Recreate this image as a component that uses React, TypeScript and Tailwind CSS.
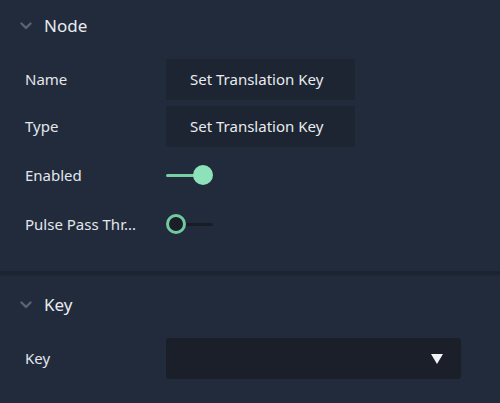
import React from "react";

const font = { fontFamily: "'Noto Sans', 'DejaVu Sans', sans-serif" };

function Chevron() {
  return (
    <svg width="12" height="8" viewBox="0 0 12 8" className="block shrink-0">
      <path d="M1.5 1.5 L6 6 L10.5 1.5" fill="none" stroke="#5b6270" strokeWidth="2.4" strokeLinecap="round" strokeLinejoin="round" />
    </svg>
  );
}

function Header({ title }: { title: string }) {
  return (
    <div className="flex h-[52px] items-center pl-[20px]">
      <Chevron />
      <span className="ml-[12px] text-[17px] text-[#e8ebf0]">{title}</span>
    </div>
  );
}

function Label({ children }: { children: React.ReactNode }) {
  return (
    <div className="w-[166px] shrink-0 whitespace-nowrap pl-[25px] text-[15px] text-[#e3e6ec]">{children}</div>
  );
}

export default function App() {
  return (
    <div className="h-[403px] w-[500px] overflow-hidden bg-[#222b3b]" style={font}>
      <Header title="Node" />
      <div className="mt-[7px] flex flex-col gap-[6px]">
        <div className="flex h-[41px] items-center">
          <Label>Name</Label>
          <div className="flex h-[41px] w-[189px] shrink-0 items-center bg-[#1d2532] pl-[24px] text-[15px] text-[#e8ebf0]">
            Set Translation Key
          </div>
        </div>
        <div className="flex h-[41px] items-center">
          <Label>Type</Label>
          <div className="flex h-[41px] w-[189px] shrink-0 items-center bg-[#1d2532] pl-[24px] text-[15px] text-[#e8ebf0]">
            Set Translation Key
          </div>
        </div>
      </div>
      <div className="flex h-[48px] items-center pt-[8px]">
        <Label>Enabled</Label>
        <div className="relative h-[20px] w-[48px] shrink-0">
          <div className="absolute left-0 top-[8.5px] h-[3px] w-[30px] rounded-full bg-[#76cfa5]" />
          <div className="absolute left-[27px] top-0 h-[20px] w-[20px] rounded-full bg-[#8de2ba]" />
        </div>
      </div>
      <div className="flex h-[48px] items-center pt-[10px]">
        <Label>Pulse Pass Thr...</Label>
        <div className="relative h-[20px] w-[48px] shrink-0">
          <div className="absolute left-[16px] top-[8.5px] h-[3px] w-[31px] rounded-full bg-[#181d25]" />
          <div className="absolute left-0 top-0 h-[20px] w-[20px] rounded-full border-[3px] border-[#72c99f] bg-[#1a1e26]" />
        </div>
      </div>
      <div className="mt-[28px] h-[3px] bg-[#1c2331] shadow-[0_1px_2px_rgba(0,0,0,0.18)]" />
      <div className="mt-[5px]">
        <Header title="Key" />
      </div>
      <div className="mt-[7px] flex h-[41px] items-center">
        <Label>Key</Label>
        <div className="flex h-[41px] w-[295px] shrink-0 items-center justify-end rounded-[3px] bg-[#1b1f29] pr-[18px]">
          <svg width="12" height="10" viewBox="0 0 12 10">
            <path d="M0 0 L12 0 L6 10 Z" fill="#f2f3f5" />
          </svg>
        </div>
      </div>
    </div>
  );
}
